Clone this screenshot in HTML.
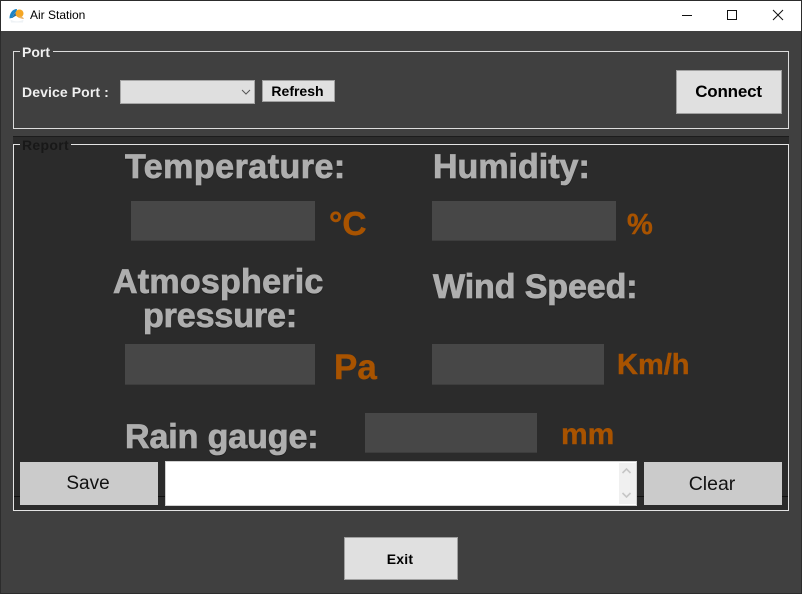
<!DOCTYPE html>
<html><head><meta charset="utf-8">
<style>
html,body{margin:0;padding:0;width:802px;height:594px;overflow:hidden;background:#404040}
*{box-sizing:border-box}
.a{position:absolute;white-space:nowrap}
.t{font-family:"Liberation Sans",sans-serif;font-weight:bold;color:#aeaeae;font-size:34px;line-height:34px;text-shadow:0 1px 1px #111;-webkit-text-stroke:.8px #aeaeae}
.u{font-family:"Liberation Sans",sans-serif;font-weight:bold;color:#a85300;-webkit-text-stroke:.4px #a85300}
.f{background:#474747;border-bottom:1px solid #3d3d3d}
.b{font-family:"Liberation Sans","DejaVu Sans",sans-serif;text-align:center;color:#000;background:#e0e0e0;border:1px solid #a0a0a0}
.w{font-family:"Liberation Sans",sans-serif;font-weight:bold;color:#f0f0f0;font-size:14px}
</style></head><body>
<div class="a" style="left:0;top:0;width:802px;height:594px;background:#404040;border:1px solid #2c2c2c"></div>
<div class="a" style="left:1px;top:1px;width:800px;height:30px;background:#fff"></div>
<svg class="a" style="left:9px;top:8px" width="16" height="16" viewBox="0 0 16 16">
<path d="M0.5 10.500C0.5 5 3.500 1 8 1L7.500 4C5.500 5 4 7 3.500 10C2.500 10 1.500 10 0.5 10.500Z" fill="#1c84c6"/>
<path d="M3.500 10C4 7 5.500 5 7.500 4.500L9 7.500C7 7.500 5 8.500 3.500 10Z" fill="#2a6f9e"/>
<circle cx="10.500" cy="5.500" r="4" fill="#f5a623"/>
<path d="M9 9C11 8 13.500 8.500 15 10.500L14 11 9.500 9.800Z" fill="#e8b36a"/>
<path d="M1.500 11.500C5 14 11 14 14.500 11.500L14 14.500 2 14.500Z" fill="#eef2f5"/>
</svg>
<div class="a" style="left:30px;top:8px;font:12px/15px 'Liberation Sans',sans-serif;color:#000">Air Station</div>
<svg class="a" style="left:680px;top:8px" width="112" height="16" viewBox="0 0 112 16" fill="none" stroke="#111" stroke-width="1">
<path d="M2 7.500H12"/>
<rect x="47.500" y="2.500" width="9" height="9"/>
<path d="M93 2L103 12M103 2L93 12"/>
</svg>

<!-- Port group -->
<div class="a" style="left:13px;top:51px;width:776px;height:78px;border:1px solid #dcdcdc"></div>
<div class="a w" style="left:20px;top:44px;background:#404040;padding:0 3px 0 2px;line-height:16px;height:16px">Port</div>
<div class="a w" style="left:22px;top:83px;line-height:18px;letter-spacing:.1px">Device Port :</div>
<div class="a" style="left:120px;top:80px;width:135px;height:24px;background:#dfdfdf;border:1px solid #a6a6a6"></div>
<svg class="a" style="left:241px;top:89px" width="10" height="7" viewBox="0 0 10 7" fill="none" stroke="#555" stroke-width="1"><path d="M1 1L5 5L9 1"/></svg>
<div class="a b" style="left:262px;top:80px;width:73px;height:22px;font-weight:bold;font-size:14px;line-height:21px;padding-right:2px">Refresh</div>
<div class="a b" style="left:676px;top:70px;width:106px;height:44px;font-weight:bold;font-size:17px;line-height:42px;letter-spacing:-.2px;padding-right:1px">Connect</div>

<!-- Report group -->
<div class="a" style="left:13px;top:136px;width:776px;height:375px;background:#2b2b2b;border-top:1px solid #1c1c1c"></div>
<div class="a" style="left:13px;top:144px;width:776px;height:367px;border:1px solid #e4e4e4"></div>
<div class="a" style="left:20px;top:137px;background:#2b2b2b;padding:0 2px;font:bold 14px/16px 'Liberation Sans',sans-serif;color:#181818;letter-spacing:.3px">Report</div>
<div class="a" style="left:14px;top:496px;width:774px;height:1px;background:#111"></div>

<div class="a t" style="left:125px;top:150px;letter-spacing:.5px">Temperature:</div>
<div class="a t" style="left:433px;top:150px">Humidity:</div>
<div class="a t" style="left:113px;top:265px;letter-spacing:.25px">Atmospheric</div>
<div class="a t" style="left:143px;top:299px;letter-spacing:-.1px">pressure:</div>
<div class="a t" style="left:433px;top:270px;letter-spacing:-.1px">Wind Speed:</div>
<div class="a t" style="left:125px;top:420px;letter-spacing:-.1px">Rain gauge:</div>

<div class="a f" style="left:131px;top:201px;width:184px;height:40px"></div>
<div class="a f" style="left:432px;top:201px;width:184px;height:40px"></div>
<div class="a f" style="left:125px;top:344px;width:190px;height:41px"></div>
<div class="a f" style="left:432px;top:344px;width:172px;height:41px"></div>
<div class="a f" style="left:365px;top:413px;width:172px;height:40px"></div>

<div class="a u" style="left:329px;top:205px;font-size:33.500px;line-height:40px">°C</div>
<div class="a u" style="left:627px;top:208px;font-size:29px;line-height:34px">%</div>
<div class="a u" style="left:334px;top:348px;font-size:35px;line-height:40px">Pa</div>
<div class="a u" style="left:617px;top:348px;font-size:29px;line-height:34px">Km/h</div>
<div class="a u" style="left:561px;top:418px;font-size:30px;line-height:34px">mm</div>

<div class="a" style="left:20px;top:462px;width:136px;height:43px;background:#cbcbcb;font:19px/44px 'Liberation Sans',sans-serif;text-align:center;color:#111">Save</div>
<div class="a" style="left:156px;top:462px;width:2px;height:43px;background:#cbcbcb"></div>
<div class="a" style="left:165px;top:461px;width:472px;height:45px;background:#fff;border:1px solid #cfcfcf"></div>
<div class="a" style="left:619px;top:463px;width:17px;height:41px;background:#f0f0f0"></div>
<svg class="a" style="left:621px;top:467px" width="11" height="32" viewBox="0 0 11 32" fill="none" stroke="#c6c6c6" stroke-width="1.600"><path d="M1.500 6L5.500 2L9.500 6M1.500 26L5.500 30L9.500 26"/></svg>
<div class="a" style="left:644px;top:462px;width:138px;height:43px;background:#cbcbcb;font:19.500px/44px 'Liberation Sans',sans-serif;text-align:center;color:#111;padding-right:2px">Clear</div>

<div class="a b" style="left:344px;top:537px;width:114px;height:43px;font-weight:bold;font-size:14px;line-height:42px;letter-spacing:.2px;padding-right:2px">Exit</div>
</body></html>
